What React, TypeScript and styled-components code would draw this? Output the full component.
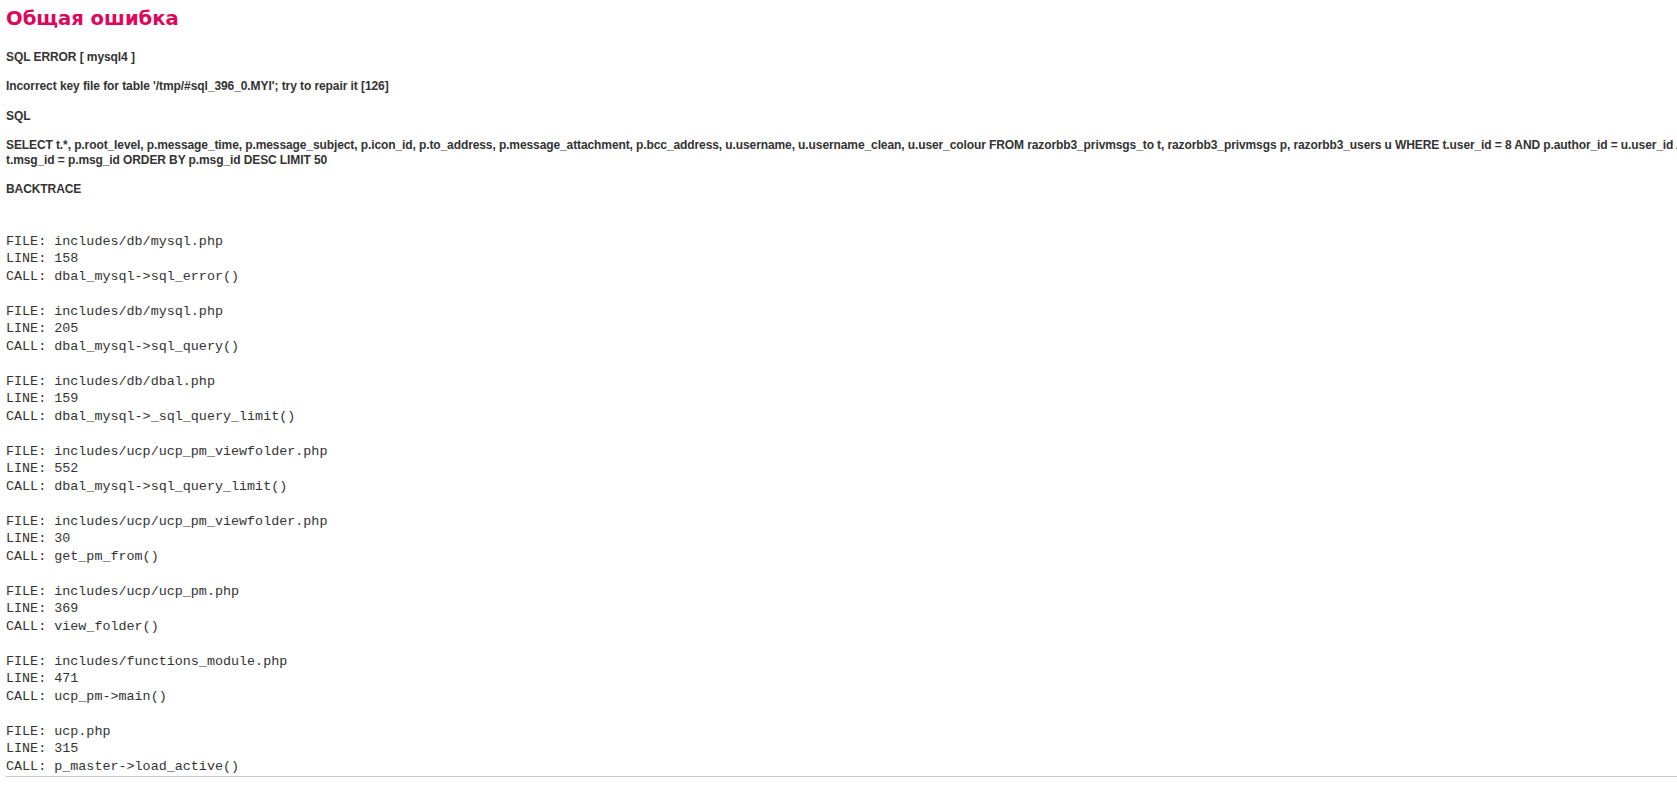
import React from 'react';
import styled, { createGlobalStyle } from 'styled-components';

const GlobalStyle = createGlobalStyle`
  html, body {
    margin: 0;
    padding: 0;
    background: #ffffff;
    overflow: hidden;
  }
`;

const Page = styled.div`
  width: 2400px;
  padding: 7px 6px 0;
`;

const Title = styled.h1`
  margin: 0;
  font-family: 'DejaVu Sans', Verdana, sans-serif;
  font-size: 19.6px;
  line-height: 24px;
  font-weight: bold;
  color: #df075c;
`;

const Content = styled.div`
  margin-top: 19px;
  padding-bottom: 1px;
  border-bottom: 1px solid #c8c8c8;
  color: #333333;
  font: bold 12px 'Liberation Sans', Arial, Helvetica, sans-serif;
  line-height: 14.7px;
  letter-spacing: -0.08px;
`;

const Para = styled.div`
  margin-bottom: 14.7px;
`;

const SqlLine = styled.div`
  white-space: nowrap;
  letter-spacing: -0.1px;
`;

const Trace = styled.div`
  margin-top: 1px;
  padding-top: 35px;
  font-family: 'Liberation Mono', 'Courier New', monospace;
  font-size: 13.4px;
  font-weight: normal;
  letter-spacing: 0;
  line-height: 17.5px;
  color: #333333;
`;

const Entry = styled.div<{ $last?: boolean }>`
  margin-bottom: ${({ $last }) => ($last ? '0' : '17.5px')};
`;

const backtrace = [
  { file: 'includes/db/mysql.php', line: 158, call: 'dbal_mysql->sql_error()' },
  { file: 'includes/db/mysql.php', line: 205, call: 'dbal_mysql->sql_query()' },
  { file: 'includes/db/dbal.php', line: 159, call: 'dbal_mysql->_sql_query_limit()' },
  { file: 'includes/ucp/ucp_pm_viewfolder.php', line: 552, call: 'dbal_mysql->sql_query_limit()' },
  { file: 'includes/ucp/ucp_pm_viewfolder.php', line: 30, call: 'get_pm_from()' },
  { file: 'includes/ucp/ucp_pm.php', line: 369, call: 'view_folder()' },
  { file: 'includes/functions_module.php', line: 471, call: 'ucp_pm->main()' },
  { file: 'ucp.php', line: 315, call: 'p_master->load_active()' },
];

const App = () => {
  return (
    <>
      <GlobalStyle />
      <Page>
        <Title>Общая ошибка</Title>
        <Content>
          <Para>SQL ERROR [ mysql4 ]</Para>
          <Para>Incorrect key file for table '/tmp/#sql_396_0.MYI'; try to repair it [126]</Para>
          <Para>SQL</Para>
          <Para>
            <SqlLine>
              SELECT t.*, p.root_level, p.message_time, p.message_subject, p.icon_id, p.to_address,
              p.message_attachment, p.bcc_address, u.username, u.username_clean, u.user_colour FROM
              razorbb3_privmsgs_to t, razorbb3_privmsgs p, razorbb3_users u WHERE t.user_id = 8 AND
              p.author_id = u.user_id AND t.folder_id = 0 AND
            </SqlLine>
            <SqlLine>t.msg_id = p.msg_id ORDER BY p.msg_id DESC LIMIT 50</SqlLine>
          </Para>
          <div>BACKTRACE</div>
          <Trace>
            {backtrace.map((item, i) => (
              <Entry key={i} $last={i === backtrace.length - 1}>
                FILE: {item.file}
                <br />
                LINE: {item.line}
                <br />
                CALL: {item.call}
              </Entry>
            ))}
          </Trace>
        </Content>
      </Page>
    </>
  );
};

export default App;
